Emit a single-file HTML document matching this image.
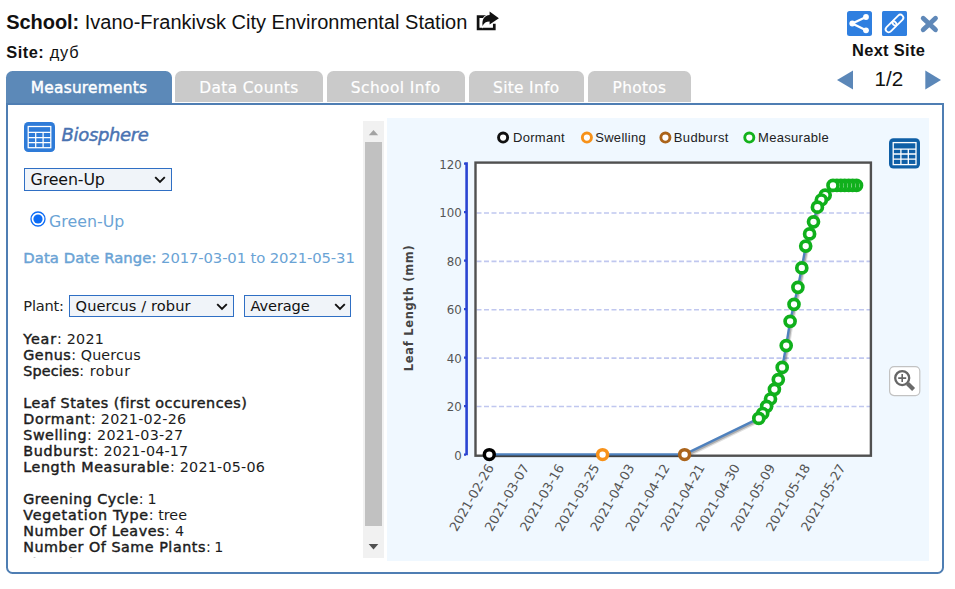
<!DOCTYPE html>
<html lang="en">
<head>
<meta charset="utf-8">
<title>School: Ivano-Frankivsk City Environmental Station</title>
<style>
html,body{margin:0;padding:0;background:#fff;}
body{width:955px;height:589px;position:relative;overflow:hidden;font-family:"DejaVu Sans","Liberation Sans",sans-serif;color:#1a1a1a;}
.abs{position:absolute;white-space:nowrap;}
.ar{font-family:"Liberation Sans",sans-serif;}
#school{left:6.2px;top:9.8px;font-size:20px;line-height:24px;color:#111;white-space:pre;}
#site{left:6.3px;top:42.4px;font-size:16.4px;line-height:20px;color:#111;white-space:pre;}
.sb{-webkit-text-stroke:0.45px currentColor;}
.tab{position:absolute;top:71px;height:31px;border-radius:6.5px 6.5px 0 0;background:#cacaca;color:#fff;-webkit-text-stroke:0.2px #fff;font-size:15.4px;line-height:34.8px;text-align:center;white-space:nowrap;}
.tab.on{background:#5c89b8;height:33px;}
#panel{position:absolute;left:6px;top:103px;width:934px;height:467px;border:2px solid #4f7eb3;border-radius:0 0 6.5px 6.5px;background:#fff;}
#chartbg{position:absolute;left:387px;top:118px;width:542px;height:443px;background:#f0f8ff;}
.bio{font-size:18px;line-height:22px;font-style:italic;color:#4a73b2;-webkit-text-stroke:0.35px #4a73b2;}
.gl{font-size:15.8px;line-height:22px;color:#6aa3d5;}
.ddr{font-size:14.8px;line-height:22px;color:#6aa3d5;white-space:pre;}
.pl{font-size:14.6px;line-height:22px;color:#222;}
.t{position:absolute;left:23.3px;font-size:14.3px;line-height:17px;white-space:pre;color:#1c1c1c;}
.sel{position:absolute;box-sizing:border-box;border:1px solid #2f6fc4;background:#f0f4f9;font-size:14.6px;color:#111;white-space:nowrap;}
.sel .st{position:absolute;left:5.6px;}
.sel svg{position:absolute;}
.tk{font-family:"DejaVu Sans",sans-serif;font-size:12px;fill:#555;}
.xl{font-size:12.9px;}
.yt{font-size:11.8px;}
.yl{font-family:"DejaVu Sans",sans-serif;font-size:11.5px;font-weight:bold;fill:#444;}
.lg{font-family:"Liberation Sans",sans-serif;font-size:13px;fill:#222;}
</style>
</head>
<body>
<div id="school" class="abs ar"><b style="letter-spacing:-0.049px">School:</b><span style="letter-spacing:0.006px"> Ivano-Frankivsk City Environmental Station</span></div>
<div id="site" class="abs ar"><b style="letter-spacing:0.494px">Site:</b><span style="letter-spacing:0.852px"> дуб</span></div>
<svg class="abs" style="left:475px;top:10px" width="26" height="22" viewBox="0 0 26 22">
<path d="M11.6 6.7 H3.1 V19 H19.3 V13.8" fill="none" stroke="#111" stroke-width="2.7" stroke-linejoin="miter"/>
<path d="M14.6 1.6 L23.9 8.2 L14.6 14.4 V11.4 C11.2 11.4 9 12.6 7.6 16 C6.6 9.6 9.4 5.1 14.6 4.9 Z" fill="#111" stroke="#fff" stroke-width="1.5" paint-order="stroke"/>
</svg>
<!-- top right icons -->
<svg class="abs" style="left:847px;top:11px" width="25" height="25" viewBox="0 0 25 25">
<rect x="0" y="0" width="25" height="25" rx="2.5" fill="#2f7fe0"/>
<path d="M19 6 L5.3 12.5 L19 19.3" fill="none" stroke="#fff" stroke-width="2.3"/>
<circle cx="19" cy="6" r="2.9" fill="#fff"/><circle cx="5.3" cy="12.5" r="2.9" fill="#fff"/><circle cx="19" cy="19.3" r="2.9" fill="#fff"/>
</svg>
<svg class="abs" style="left:882px;top:11px" width="25" height="25" viewBox="0 0 25 25">
<rect x="0" y="0" width="25" height="25" rx="1.5" fill="#2f7fe0"/>
<g transform="rotate(-45 12.5 12.5)" fill="none" stroke="#fff" stroke-width="1.8">
<rect x="1.3" y="9.5" width="12.8" height="6" rx="3"/>
<rect x="10.9" y="9.5" width="12.8" height="6" rx="3"/>
</g>
</svg>
<svg class="abs" style="left:919px;top:14px" width="21" height="20" viewBox="0 0 21 20">
<path d="M4.2 4.2 L16.5 15.8 M16.5 4.2 L4.2 15.8" stroke="#5f88b8" stroke-width="4.8" stroke-linecap="round" fill="none"/>
</svg>
<div class="abs ar" style="left:852px;top:40px;font-size:16.4px;line-height:20px;font-weight:bold;color:#111;letter-spacing:0.35px">Next Site</div>
<svg class="abs" style="left:836px;top:70px" width="106" height="21" viewBox="0 0 106 21">
<path d="M1 10.1 L17 0.6 V19.6 Z" fill="#5b87b8"/>
<path d="M105 10.1 L89.3 0.6 V19.6 Z" fill="#5b87b8"/>
</svg>
<div class="abs ar" style="left:874.6px;top:66px;font-size:20.6px;line-height:26px;color:#111;">1/2</div>

<!-- tabs -->
<div class="tab on" style="left:6px;width:166px;"><span class="sb" style="letter-spacing:0.234px">Measurements</span></div>
<div class="tab" style="left:175px;width:148px;"><span style="letter-spacing:0.357px">Data Counts</span></div>
<div class="tab" style="left:327px;width:137.5px;"><span style="letter-spacing:0.434px">School Info</span></div>
<div class="tab" style="left:469px;width:114.5px;"><span style="letter-spacing:0.314px">Site Info</span></div>
<div class="tab" style="left:587.5px;width:103.8px;"><span style="letter-spacing:0.280px">Photos</span></div>
<div id="panel"></div>
<div id="chartbg"></div>

<!-- left content -->
<svg class="abs" style="left:24px;top:122px" width="31" height="30" viewBox="0 0 31 30">
<rect x="0" y="0.1" width="31" height="29.9" rx="4.3" fill="#2e7bd8"/>
<g fill="none" stroke="#fff" stroke-width="1.25">
<rect x="4.2" y="4.5" width="22.6" height="21.2"/>
<path d="M4.2 10.4 H26.8 M4.2 15.6 H26.8 M4.2 20.6 H26.8 M11.7 10.4 V25.7 M19.1 10.4 V25.7"/>
</g>
</svg>
<div class="abs bio" style="left:61.6px;top:124px;"><span class="sb" style="letter-spacing:-0.347px">Biosphere</span></div>

<div class="sel" style="left:24px;top:168px;width:148px;height:23px;font-size:15.8px;line-height:21px;"><span class="st" style="letter-spacing:-0.118px">Green-Up</span>
<svg style="left:129px;top:7px" width="12" height="8" viewBox="0 0 12 8"><path d="M1.2 1.2 L6 6 L10.8 1.2" fill="none" stroke="#111" stroke-width="1.9"/></svg></div>

<svg class="abs" style="left:29.6px;top:210.5px" width="16" height="16" viewBox="0 0 16 16">
<circle cx="8" cy="8" r="7" fill="#fff" stroke="#0d6cf5" stroke-width="1.3"/><circle cx="8" cy="8" r="4.6" fill="#0d6cf5"/>
</svg>
<div class="abs gl" style="left:49px;top:210.5px;"><span style="letter-spacing:0.020px">Green-Up</span></div>

<div class="abs ddr" style="left:23.3px;top:246.5px;"><span class="sb" style="letter-spacing:0.075px">Data Date Range:</span><span style="letter-spacing:-0.110px"> 2017-03-01 to 2021-05-31</span></div>

<div class="abs pl" style="left:23.3px;top:294.6px;"><span style="letter-spacing:-0.198px">Plant:</span></div>
<div class="sel" style="left:69px;top:295px;width:165px;height:22px;line-height:20px;"><span class="st" style="letter-spacing:0.094px">Quercus / robur</span>
<svg style="left:146px;top:7px" width="12" height="8" viewBox="0 0 12 8"><path d="M1.2 1.2 L6 6 L10.8 1.2" fill="none" stroke="#111" stroke-width="1.9"/></svg></div>
<div class="sel" style="left:244px;top:295px;width:107px;height:22px;line-height:20px;"><span class="st" style="letter-spacing:-0.134px">Average</span>
<svg style="left:88.5px;top:7px" width="12" height="8" viewBox="0 0 12 8"><path d="M1.2 1.2 L6 6 L10.8 1.2" fill="none" stroke="#111" stroke-width="1.9"/></svg></div>

<div id="info" style="position:absolute;left:0;top:0;width:362px;height:558px;overflow:hidden;">
<div class="t" style="top:331px"><span class="sb" style="letter-spacing:0.842px">Year</span><span style="letter-spacing:0.242px">: 2021</span></div>
<div class="t" style="top:347px"><span class="sb" style="letter-spacing:0.489px">Genus</span><span style="letter-spacing:0.122px">: Quercus</span></div>
<div class="t" style="top:363px"><span class="sb" style="letter-spacing:0.138px">Species</span><span style="letter-spacing:0.516px">: robur</span></div>
<div class="t" style="top:395px"><span class="sb" style="letter-spacing:0.487px">Leaf States (first occurences)</span></div>
<div class="t" style="top:411px"><span class="sb" style="letter-spacing:0.707px">Dormant</span><span style="letter-spacing:0.246px">: 2021-02-26</span></div>
<div class="t" style="top:427px"><span class="sb" style="letter-spacing:0.509px">Swelling</span><span style="letter-spacing:0.329px">: 2021-03-27</span></div>
<div class="t" style="top:443px"><span class="sb" style="letter-spacing:0.686px">Budburst</span><span style="letter-spacing:0.171px">: 2021-04-17</span></div>
<div class="t" style="top:459px"><span class="sb" style="letter-spacing:0.585px">Length Measurable</span><span style="letter-spacing:0.221px">: 2021-05-06</span></div>
<div class="t" style="top:491px"><span class="sb" style="letter-spacing:0.455px">Greening Cycle</span><span style="letter-spacing:-0.323px">: 1</span></div>
<div class="t" style="top:507px"><span class="sb" style="letter-spacing:0.734px">Vegetation Type</span><span style="letter-spacing:0.013px">: tree</span></div>
<div class="t" style="top:523px"><span class="sb" style="letter-spacing:0.563px">Number Of Leaves</span><span style="letter-spacing:0.244px">: 4</span></div>
<div class="t" style="top:539px"><span class="sb" style="letter-spacing:0.534px">Number Of Same Plants</span><span style="letter-spacing:-0.490px">: 1</span></div>
<div class="t" style="top:555.5px"><span class="sb" style="letter-spacing:0.175px">Elevation</span><span style="letter-spacing:-0.527px">: 263.8m</span></div>
</div>

<!-- scrollbar -->
<div class="abs" style="left:363px;top:121px;width:21px;height:437px;background:#f1f1f1"></div>
<div class="abs" style="left:365px;top:142px;width:17px;height:384px;background:#c1c1c1"></div>
<svg class="abs" style="left:363px;top:121px" width="21" height="437" viewBox="0 0 21 437">
<path d="M5.8 14.2 L10.5 8.9 L15.2 14.2 Z" fill="#a3a3a3"/>
<path d="M5.7 423 L10.5 428.6 L15.3 423 Z" fill="#505050"/>
</svg>
<svg id="chart" width="955" height="589" viewBox="0 0 955 589" style="position:absolute;left:0;top:0">
<rect x="475.5" y="162.6" width="395.4" height="293.1" fill="#fff"/>
<line x1="476.5" x2="870" y1="406.5" y2="406.5" stroke="#c0c7ef" stroke-width="1.6" stroke-dasharray="5,2.5"/>
<line x1="476.5" x2="870" y1="358.1" y2="358.1" stroke="#c0c7ef" stroke-width="1.6" stroke-dasharray="5,2.5"/>
<line x1="476.5" x2="870" y1="309.8" y2="309.8" stroke="#c0c7ef" stroke-width="1.6" stroke-dasharray="5,2.5"/>
<line x1="476.5" x2="870" y1="261.4" y2="261.4" stroke="#c0c7ef" stroke-width="1.6" stroke-dasharray="5,2.5"/>
<line x1="476.5" x2="870" y1="213.0" y2="213.0" stroke="#c0c7ef" stroke-width="1.6" stroke-dasharray="5,2.5"/>
<line x1="466.6" x2="466.6" y1="162.2" y2="455.2" stroke="#2a44d2" stroke-width="2.6"/>
<line x1="464" x2="466" y1="454.6" y2="454.6" stroke="#2a44d2" stroke-width="2.4"/>
<text x="461.8" y="459.6" text-anchor="end" class="tk yt">0</text>
<line x1="464" x2="466" y1="406.1" y2="406.1" stroke="#2a44d2" stroke-width="2.4"/>
<text x="461.8" y="411.1" text-anchor="end" class="tk yt">20</text>
<line x1="464" x2="466" y1="357.6" y2="357.6" stroke="#2a44d2" stroke-width="2.4"/>
<text x="461.8" y="362.6" text-anchor="end" class="tk yt">40</text>
<line x1="464" x2="466" y1="309.1" y2="309.1" stroke="#2a44d2" stroke-width="2.4"/>
<text x="461.8" y="314.2" text-anchor="end" class="tk yt">60</text>
<line x1="464" x2="466" y1="260.6" y2="260.6" stroke="#2a44d2" stroke-width="2.4"/>
<text x="461.8" y="265.7" text-anchor="end" class="tk yt">80</text>
<line x1="464" x2="466" y1="212.1" y2="212.1" stroke="#2a44d2" stroke-width="2.4"/>
<text x="461.8" y="217.2" text-anchor="end" class="tk yt">100</text>
<line x1="464" x2="466" y1="163.6" y2="163.6" stroke="#2a44d2" stroke-width="2.4"/>
<text x="461.8" y="168.7" text-anchor="end" class="tk yt">120</text>
<rect x="475.5" y="162.6" width="395.4" height="293.1" fill="none" stroke="#505050" stroke-width="2.4"/>
<polyline points="490.5,455.6 603.8,455.6 685.8,455.6 760.0,419.6 763.9,414.7 767.8,407.5 771.7,400.2 775.6,390.5 779.5,380.8 783.5,368.6 787.4,346.8 791.3,322.5 795.2,305.5 799.1,288.5 803.0,269.1 806.9,247.3 810.8,235.1 814.7,223.0 818.6,208.4 822.5,201.2 826.4,196.3 834.2,186.6 838.1,186.6 842.0,186.6 845.9,186.6 849.9,186.6 853.8,186.6 857.7,186.6" fill="none" stroke="#000" stroke-opacity="0.22" stroke-width="2.6" stroke-linejoin="round"/>
<polyline points="491.2,456.3 604.5,456.3 686.5,456.3 760.7,420.3 764.6,415.4 768.5,408.2 772.4,400.9 776.3,391.2 780.2,381.5 784.1,369.3 788.1,347.5 792.0,323.2 795.9,306.2 799.8,289.2 803.7,269.8 807.6,248.0 811.5,235.8 815.4,223.7 819.3,209.1 823.2,201.9 827.1,197.0 834.9,187.3 838.8,187.3 842.7,187.3 846.6,187.3 850.6,187.3 854.5,187.3 858.4,187.3" fill="none" stroke="#000" stroke-opacity="0.12" stroke-width="3.2" stroke-linejoin="round"/>
<polyline points="489.3,454.4 602.6,454.4 684.6,454.4 758.8,418.4 762.7,413.5 766.6,406.3 770.5,399.0 774.4,389.3 778.3,379.6 782.2,367.4 786.2,345.6 790.1,321.3 794.0,304.3 797.9,287.3 801.8,267.9 805.7,246.1 809.6,233.9 813.5,221.8 817.4,207.2 821.3,200.0 825.2,195.1 833.0,185.4 836.9,185.4 840.8,185.4 844.7,185.4 848.7,185.4 852.6,185.4 856.5,185.4" fill="none" stroke="#4f81bd" stroke-width="2.4" stroke-linejoin="round"/>
<circle cx="856.5" cy="185.4" r="5.0" fill="#fff" stroke="#10b01c" stroke-width="3.7"/>
<circle cx="852.6" cy="185.4" r="5.0" fill="#fff" stroke="#10b01c" stroke-width="3.7"/>
<circle cx="848.7" cy="185.4" r="5.0" fill="#fff" stroke="#10b01c" stroke-width="3.7"/>
<circle cx="844.7" cy="185.4" r="5.0" fill="#fff" stroke="#10b01c" stroke-width="3.7"/>
<circle cx="840.8" cy="185.4" r="5.0" fill="#fff" stroke="#10b01c" stroke-width="3.7"/>
<circle cx="836.9" cy="185.4" r="5.0" fill="#fff" stroke="#10b01c" stroke-width="3.7"/>
<circle cx="833.0" cy="185.4" r="5.0" fill="#fff" stroke="#10b01c" stroke-width="3.7"/>
<circle cx="825.2" cy="195.1" r="5.0" fill="#fff" stroke="#10b01c" stroke-width="3.7"/>
<circle cx="821.3" cy="200.0" r="5.0" fill="#fff" stroke="#10b01c" stroke-width="3.7"/>
<circle cx="817.4" cy="207.2" r="5.0" fill="#fff" stroke="#10b01c" stroke-width="3.7"/>
<circle cx="813.5" cy="221.8" r="5.0" fill="#fff" stroke="#10b01c" stroke-width="3.7"/>
<circle cx="809.6" cy="233.9" r="5.0" fill="#fff" stroke="#10b01c" stroke-width="3.7"/>
<circle cx="805.7" cy="246.1" r="5.0" fill="#fff" stroke="#10b01c" stroke-width="3.7"/>
<circle cx="801.8" cy="267.9" r="5.0" fill="#fff" stroke="#10b01c" stroke-width="3.7"/>
<circle cx="797.9" cy="287.3" r="5.0" fill="#fff" stroke="#10b01c" stroke-width="3.7"/>
<circle cx="794.0" cy="304.3" r="5.0" fill="#fff" stroke="#10b01c" stroke-width="3.7"/>
<circle cx="790.1" cy="321.3" r="5.0" fill="#fff" stroke="#10b01c" stroke-width="3.7"/>
<circle cx="786.2" cy="345.6" r="5.0" fill="#fff" stroke="#10b01c" stroke-width="3.7"/>
<circle cx="782.2" cy="367.4" r="5.0" fill="#fff" stroke="#10b01c" stroke-width="3.7"/>
<circle cx="778.3" cy="379.6" r="5.0" fill="#fff" stroke="#10b01c" stroke-width="3.7"/>
<circle cx="774.4" cy="389.3" r="5.0" fill="#fff" stroke="#10b01c" stroke-width="3.7"/>
<circle cx="770.5" cy="399.0" r="5.0" fill="#fff" stroke="#10b01c" stroke-width="3.7"/>
<circle cx="766.6" cy="406.3" r="5.0" fill="#fff" stroke="#10b01c" stroke-width="3.7"/>
<circle cx="762.7" cy="413.5" r="5.0" fill="#fff" stroke="#10b01c" stroke-width="3.7"/>
<circle cx="758.8" cy="418.4" r="5.0" fill="#fff" stroke="#10b01c" stroke-width="3.7"/>
<circle cx="489.3" cy="454.6" r="4.95" fill="#fff" stroke="#000" stroke-width="3.5"/>
<circle cx="602.6" cy="454.6" r="4.95" fill="#fff" stroke="#f7921a" stroke-width="3.5"/>
<circle cx="684.6" cy="454.6" r="4.95" fill="#fff" stroke="#ab641b" stroke-width="3.5"/>
<text class="tk xl" text-anchor="end" transform="translate(494.3,467.4) rotate(-60)">2021-02-26</text>
<text class="tk xl" text-anchor="end" transform="translate(529.5,467.4) rotate(-60)">2021-03-07</text>
<text class="tk xl" text-anchor="end" transform="translate(564.6,467.4) rotate(-60)">2021-03-16</text>
<text class="tk xl" text-anchor="end" transform="translate(599.8,467.4) rotate(-60)">2021-03-25</text>
<text class="tk xl" text-anchor="end" transform="translate(634.9,467.4) rotate(-60)">2021-04-03</text>
<text class="tk xl" text-anchor="end" transform="translate(670.1,467.4) rotate(-60)">2021-04-12</text>
<text class="tk xl" text-anchor="end" transform="translate(705.2,467.4) rotate(-60)">2021-04-21</text>
<text class="tk xl" text-anchor="end" transform="translate(740.4,467.4) rotate(-60)">2021-04-30</text>
<text class="tk xl" text-anchor="end" transform="translate(775.5,467.4) rotate(-60)">2021-05-09</text>
<text class="tk xl" text-anchor="end" transform="translate(810.7,467.4) rotate(-60)">2021-05-18</text>
<text class="tk xl" text-anchor="end" transform="translate(845.8,467.4) rotate(-60)">2021-05-27</text>
<text class="yl" text-anchor="middle" transform="translate(413.3,308.2) rotate(-90)" textLength="126" lengthAdjust="spacing">Leaf Length (mm)</text>
<circle cx="503.1" cy="137.6" r="4.55" fill="#fff" stroke="#111" stroke-width="2.9"/>
<text class="lg" x="513" y="142.2" textLength="51.7" lengthAdjust="spacing">Dormant</text>
<circle cx="586.9" cy="137.6" r="4.55" fill="#fff" stroke="#f7921a" stroke-width="2.9"/>
<text class="lg" x="595.2" y="142.2" textLength="50.5" lengthAdjust="spacing">Swelling</text>
<circle cx="665.4" cy="137.6" r="4.55" fill="#fff" stroke="#ab641b" stroke-width="2.9"/>
<text class="lg" x="673.8" y="142.2" textLength="54.6" lengthAdjust="spacing">Budburst</text>
<circle cx="749.3" cy="137.6" r="4.55" fill="#fff" stroke="#14b21c" stroke-width="2.9"/>
<text class="lg" x="758" y="142.2" textLength="70.7" lengthAdjust="spacing">Measurable</text>
</svg>
<!-- chart side icons -->
<svg class="abs" style="left:889px;top:137.5px" width="31" height="31" viewBox="0 0 31 31">
<rect x="0" y="0.2" width="31" height="30.3" rx="4.5" fill="#0f5fa6"/>
<g fill="none" stroke="#fff" stroke-width="1.3">
<rect x="4.2" y="4.6" width="22.8" height="22"/>
<path d="M4.2 11.2 H27 M4.2 16 H27 M4.2 21.2 H27 M11.9 11.2 V26.6 M19.3 11.2 V26.6"/>
</g>
</svg>
<svg class="abs" style="left:888.6px;top:365.5px" width="32" height="31" viewBox="0 0 32 31">
<rect x="0.6" y="0.6" width="30.2" height="29" rx="4.5" fill="#fff" stroke="#c2c2c2" stroke-width="1.2"/>
<circle cx="13.2" cy="12.1" r="7" fill="none" stroke="#666" stroke-width="2.3"/>
<path d="M9.2 12.1 H17.2 M13.2 8.1 V16.1" stroke="#666" stroke-width="1.6"/>
<path d="M18.5 17.4 L24.6 23.5" stroke="#6a6a6a" stroke-width="4.2"/>
</svg>
</body>
</html>
